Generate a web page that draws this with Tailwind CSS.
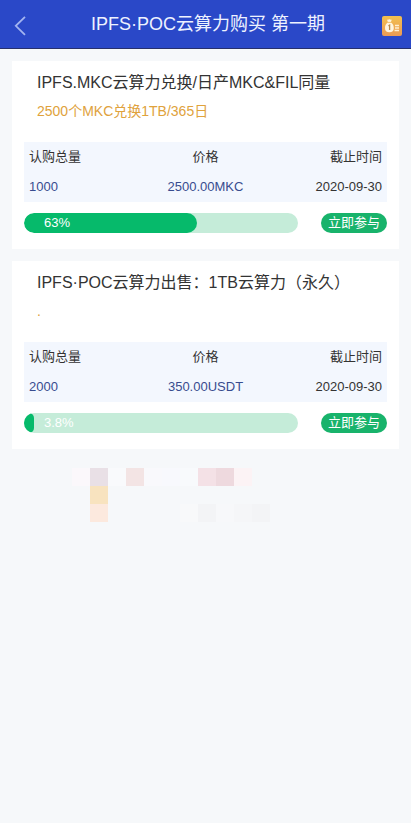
<!DOCTYPE html>
<html lang="zh-CN">
<head>
<meta charset="utf-8">
<meta name="viewport" content="width=device-width, initial-scale=1">
<title>IPFS·POC云算力购买 第一期</title>
<script src="https://cdn.jsdelivr.net/npm/@tailwindcss/browser@4"></script>
</head>
<body class="min-h-screen bg-[#f6f8fa] font-['Liberation_Sans','Noto_Sans_CJK_SC',sans-serif] text-[13px] text-[#333333]">
  <header class="flex h-[49px] items-center justify-between border-b border-[#27306b] bg-[#2a48c8] pl-3 pr-[7px]">
    <a href="#" aria-label="返回" class="flex w-6 items-center">
      <svg class="mt-1 h-5 w-4" viewBox="0 0 16 20" fill="none" stroke="#a3b4f0" stroke-width="1.8"><path d="M13 .8 3.800 9.800 13 18.800"/></svg>
    </a>
    <h1 class="text-[18px] leading-6 text-[#eef2ff]">IPFS·POC云算力购买 第一期</h1>
    <a href="#" aria-label="我的订单" class="flex w-6 items-center justify-center">
      <svg class="mt-1 h-[22px] w-[22px]" viewBox="0 0 22 22">
        <defs><linearGradient id="gold" x1="0" y1="0" x2="0" y2="1"><stop offset="0" stop-color="#f2c04f"/><stop offset="1" stop-color="#eb9a55"/></linearGradient></defs>
        <rect x="1" y="1" width="20" height="20" rx="2" fill="url(#gold)"/>
        <path d="M6 4.400c1 .7 1.500.1 2.400-.2 1 .3 1.500.8 2.400.2L9.900 7.200c1.900 1.400 2.900 3.300 2.900 5.700 0 2.900-1.500 4.300-4.400 4.300S4 15.800 4 12.900c0-2.400 1-4.300 2.900-5.700z" fill="#fff5df"/>
        <path d="M6.400 7.400h4" stroke="#edb24f" stroke-width=".8"/>
        <path d="M7.500 10.900l1.100-.7v4.700" stroke="#b98a4a" stroke-width="1.300" fill="none"/>
        <path d="M14 10.500h4M14 13h4M13.500 15.500h4.500" stroke="#fff0d2" stroke-width="1.300"/>
      </svg>
    </a>
  </header>

  <main class="flex flex-col gap-3 p-3">
    <article class="bg-white px-3 pb-4 pt-[10px]">
      <h2 class="pl-[13px] text-[16px] leading-6">IPFS.MKC云算力兑换/日产MKC&amp;FIL同量</h2>
      <p class="mt-1 pl-[13px] text-[14px] leading-6 text-[#e0a23c]">2500个MKC兑换1TB/365日</p>
      <table class="mt-[19px] w-full table-fixed bg-[#f3f7fe]">
        <thead>
          <tr class="h-[30px]">
            <th class="py-0 pl-[5px] text-left font-normal">认购总量</th>
            <th class="p-0 text-center font-normal">价格</th>
            <th class="py-0 pr-[5px] text-right font-normal">截止时间</th>
          </tr>
        </thead>
        <tbody>
          <tr class="h-[30px]">
            <td class="py-0 pl-[5px] text-left text-[#384c8f]">1000</td>
            <td class="p-0 text-center text-[#384c8f]">2500.00MKC</td>
            <td class="py-0 pr-[5px] text-right">2020-09-30</td>
          </tr>
        </tbody>
      </table>
      <div class="mt-[11px] flex items-center gap-[23px]">
        <div role="progressbar" aria-label="认购进度" aria-valuenow="63" aria-valuemin="0" aria-valuemax="100" class="relative h-5 flex-1 overflow-hidden rounded-full bg-[#c5ecd9]">
          <div class="h-full rounded-full bg-[#06ba6b]" style="width:63%"></div>
          <span class="absolute inset-y-0 left-5 leading-5 text-white">63%</span>
        </div>
        <button type="button" class="h-5 w-[66px] rounded-full bg-[#18b36b] leading-5 text-white">立即参与</button>
      </div>
    </article>

    <article class="bg-white px-3 pb-4 pt-[10px]">
      <h2 class="pl-[13px] text-[16px] leading-6">IPFS·POC云算力出售：1TB云算力（永久）</h2>
      <p class="mt-1 pl-[13px] text-[14px] leading-6 text-[#e0a23c]">.</p>
      <table class="mt-[19px] w-full table-fixed bg-[#f3f7fe]">
        <thead>
          <tr class="h-[30px]">
            <th class="py-0 pl-[5px] text-left font-normal">认购总量</th>
            <th class="p-0 text-center font-normal">价格</th>
            <th class="py-0 pr-[5px] text-right font-normal">截止时间</th>
          </tr>
        </thead>
        <tbody>
          <tr class="h-[30px]">
            <td class="py-0 pl-[5px] text-left text-[#384c8f]">2000</td>
            <td class="p-0 text-center text-[#384c8f]">350.00USDT</td>
            <td class="py-0 pr-[5px] text-right">2020-09-30</td>
          </tr>
        </tbody>
      </table>
      <div class="mt-[11px] flex items-center gap-[23px]">
        <div role="progressbar" aria-label="认购进度" aria-valuenow="3.8" aria-valuemin="0" aria-valuemax="100" class="relative h-5 flex-1 overflow-hidden rounded-full bg-[#c5ecd9]">
          <div class="h-full rounded-full bg-[#06ba6b]" style="width:3.8%"></div>
          <span class="absolute inset-y-0 left-5 leading-5 text-white">3.8%</span>
        </div>
        <button type="button" class="h-5 w-[66px] rounded-full bg-[#18b36b] leading-5 text-white">立即参与</button>
      </div>
    </article>

    <!-- Pixelated strip below the offers -->
    <div aria-hidden="true" class="ml-[60px] mt-[7px] grid auto-rows-[18px] grid-cols-[repeat(11,18px)]">
      <i class="bg-[#fbf8fb]"></i><i class="bg-[#e9e0e6]"></i><i class="bg-[#f9fafc]"></i><i class="bg-[#f3e4e4]"></i><i class="bg-[#f9f9fc]"></i><i class="bg-[#f8f9fd]"></i><i class="bg-[#f8fafc]"></i><i class="bg-[#f4e1e6]"></i><i class="bg-[#eed9de]"></i><i class="bg-[#fcf3f5]"></i><i></i>
      <i></i><i class="bg-[#f8e3bf]"></i><i></i><i></i><i></i><i></i><i></i><i></i><i></i><i></i><i></i>
      <i></i><i class="bg-[#fce9de]"></i><i></i><i></i><i></i><i></i><i class="bg-[#f8f9fa]"></i><i class="bg-[#f3f4f6]"></i><i class="bg-[#f7f8fa]"></i><i class="bg-[#f5f6f8]"></i><i class="bg-[#f3f4f6]"></i>
    </div>
  </main>
</body>
</html>
